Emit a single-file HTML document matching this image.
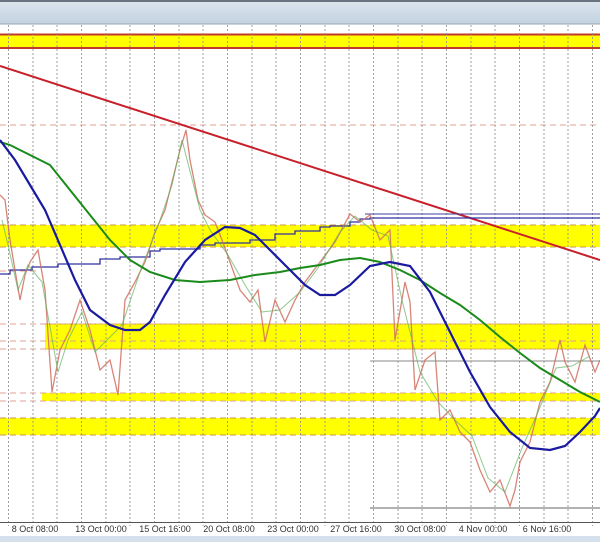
<!DOCTYPE html><html><head><style>html,body{margin:0;padding:0;width:600px;height:542px;overflow:hidden;background:#fff}</style></head><body>
<svg width="600" height="542" viewBox="0 0 600 542" xmlns="http://www.w3.org/2000/svg" font-family="Liberation Sans, sans-serif">
<defs><linearGradient id="tb" x1="0" y1="0" x2="0" y2="1"><stop offset="0" stop-color="#dde6ee"/><stop offset="1" stop-color="#c3d2e0"/></linearGradient></defs>
<rect width="600" height="542" fill="#fff"/>
<rect x="0" y="0" width="600" height="24" fill="url(#tb)"/>
<rect x="0" y="0" width="600" height="2" fill="#6a7480"/>
<line x1="0" y1="24" x2="600" y2="24" stroke="#9aa8b6"/>
<!-- bands -->
<rect x="0" y="34" width="600" height="14" fill="#ffff00"/>
<line x1="0" y1="34.5" x2="600" y2="34.5" stroke="#c0392b" stroke-width="2"/>
<line x1="0" y1="48" x2="600" y2="48" stroke="#c0392b" stroke-width="2"/>
<rect x="0" y="225" width="600" height="22" fill="#ffff00"/>
<rect x="45" y="324" width="555" height="25" fill="#ffff00"/>
<rect x="42" y="393" width="558" height="8" fill="#ffff00"/>
<rect x="0" y="418" width="600" height="17" fill="#ffff00"/>
<g stroke="#e0a090" stroke-dasharray="6,4" stroke-width="1">
<line x1="0" y1="125" x2="600" y2="125"/><line x1="0" y1="225" x2="600" y2="225"/><line x1="0" y1="247" x2="600" y2="247"/>
<line x1="0" y1="271" x2="40" y2="271"/><line x1="0" y1="324" x2="600" y2="324"/><line x1="0" y1="341" x2="600" y2="341"/><line x1="0" y1="349" x2="600" y2="349"/>
<line x1="0" y1="393" x2="600" y2="393"/><line x1="0" y1="401" x2="600" y2="401"/><line x1="0" y1="418" x2="600" y2="418"/><line x1="0" y1="435" x2="600" y2="435"/>
</g>
<g stroke="#c09020" stroke-dasharray="6,4" stroke-width="1" opacity="0.6">
<line x1="0" y1="225" x2="600" y2="225"/><line x1="0" y1="247" x2="600" y2="247"/><line x1="45" y1="324" x2="600" y2="324"/><line x1="45" y1="349" x2="600" y2="349"/><line x1="0" y1="418" x2="600" y2="418"/><line x1="0" y1="435" x2="600" y2="435"/>
</g>
<!-- grid -->
<g stroke="#8a8a8a" stroke-dasharray="2,2" stroke-width="1" opacity="0.8">
<line x1="8.5" y1="25" x2="8.5" y2="526"/><line x1="33" y1="25" x2="33" y2="526"/><line x1="57" y1="25" x2="57" y2="526"/><line x1="81.5" y1="25" x2="81.5" y2="526"/><line x1="106" y1="25" x2="106" y2="526"/><line x1="130" y1="25" x2="130" y2="526"/><line x1="154.5" y1="25" x2="154.5" y2="526"/><line x1="179" y1="25" x2="179" y2="526"/><line x1="203" y1="25" x2="203" y2="526"/><line x1="227.5" y1="25" x2="227.5" y2="526"/><line x1="252" y1="25" x2="252" y2="526"/><line x1="276" y1="25" x2="276" y2="526"/><line x1="300.5" y1="25" x2="300.5" y2="526"/><line x1="325" y1="25" x2="325" y2="526"/><line x1="349" y1="25" x2="349" y2="526"/><line x1="373.5" y1="25" x2="373.5" y2="526"/><line x1="398" y1="25" x2="398" y2="526"/><line x1="422" y1="25" x2="422" y2="526"/><line x1="446.5" y1="25" x2="446.5" y2="526"/><line x1="471" y1="25" x2="471" y2="526"/><line x1="495" y1="25" x2="495" y2="526"/><line x1="519.5" y1="25" x2="519.5" y2="526"/><line x1="544" y1="25" x2="544" y2="526"/><line x1="568" y1="25" x2="568" y2="526"/><line x1="592.5" y1="25" x2="592.5" y2="526"/>
</g>
<line x1="370" y1="361" x2="600" y2="361" stroke="#888"/>
<line x1="370" y1="508" x2="600" y2="508" stroke="#666"/>
<!-- red trend -->
<line x1="0" y1="66" x2="600" y2="260" stroke="#c8202a" stroke-width="2"/>
<!-- step lines -->
<polyline fill="none" stroke="#3030a0" stroke-width="1.3" points="0,274 10,274 10,270 32,270 32,267 58,267 58,264 100,264 100,259 120,259 120,257 150,257 150,251 160,251 160,249 200,249 200,245 215,245 215,243 250,243 250,240 275,240 275,234 295,234 295,231 320,231 320,227 330,227 330,226 350,226 350,222 360,222 360,219 370,219 370,218 600,218"/>
<polyline fill="none" stroke="#4040a0" stroke-width="1" points="365,214 600,214"/>
<!-- price -->
<polyline fill="none" stroke="#d07060" stroke-width="1.3" opacity="0.85" points="0,195 5,200 10,240 15,270 20,300 25,275 30,262 38,250 45,290 52,392 60,350 70,330 80,300 90,330 100,370 110,360 118,395 125,300 135,282 145,262 155,232 165,210 175,170 180,150 186,130 190,160 198,200 205,215 215,222 222,240 230,262 240,290 250,302 258,290 265,342 275,300 285,322 295,300 305,282 320,262 335,242 350,214 360,222 370,215 380,240 390,230 395,340 405,282 410,302 415,390 425,360 435,352 440,420 450,410 460,432 470,442 480,470 490,492 500,480 510,506 515,490 520,462 530,442 540,402 550,382 560,340 565,362 575,382 585,345 595,372 600,360"/>
<polyline fill="none" stroke="#60b060" stroke-width="1" opacity="0.7" points="2,220 8,245 18,290 28,265 42,282 58,372 68,340 82,312 95,352 122,325 140,272 160,220 172,185 182,140 200,210 210,230 228,255 245,285 262,312 280,310 300,292 318,268 340,232 355,216 372,230 388,236 402,300 420,372 438,402 455,420 472,436 488,478 505,492 522,448 538,412 556,368 572,366 590,356"/>
<!-- MAs -->
<polyline fill="none" stroke="#1a8a1a" stroke-width="2" points="0,142 10,145 30,155 50,165 70,190 90,215 110,240 130,260 150,272 175,280 200,282 230,280 255,275 280,272 300,268 320,265 340,260 360,258 380,262 400,270 420,280 440,293 460,305 480,320 500,337 520,353 540,368 560,380 580,392 600,402"/>
<polyline fill="none" stroke="#1a1aa0" stroke-width="2.2" points="0,140 15,160 30,185 45,210 60,245 75,280 90,310 110,325 125,330 140,330 150,322 165,295 185,262 205,240 225,227 240,228 255,235 270,250 290,270 305,285 320,295 335,295 350,285 370,266 390,262 410,266 430,292 450,332 470,372 490,407 510,432 530,448 550,450 565,446 580,432 595,416 600,408"/>
<!-- axis -->
<line x1="0" y1="522.5" x2="600" y2="522.5" stroke="#555"/>
<rect x="0" y="536" width="600" height="6" fill="#d4e0ec"/>
<g font-size="9" fill="#333" text-anchor="middle">
<text x="35" y="532">8 Oct 08:00</text><text x="101" y="532">13 Oct 00:00</text><text x="165" y="532">15 Oct 16:00</text><text x="229" y="532">20 Oct 08:00</text><text x="293" y="532">23 Oct 00:00</text><text x="356" y="532">27 Oct 16:00</text><text x="420" y="532">30 Oct 08:00</text><text x="483" y="532">4 Nov 00:00</text><text x="547" y="532">6 Nov 16:00</text>
</g>
</svg>
</body></html>
